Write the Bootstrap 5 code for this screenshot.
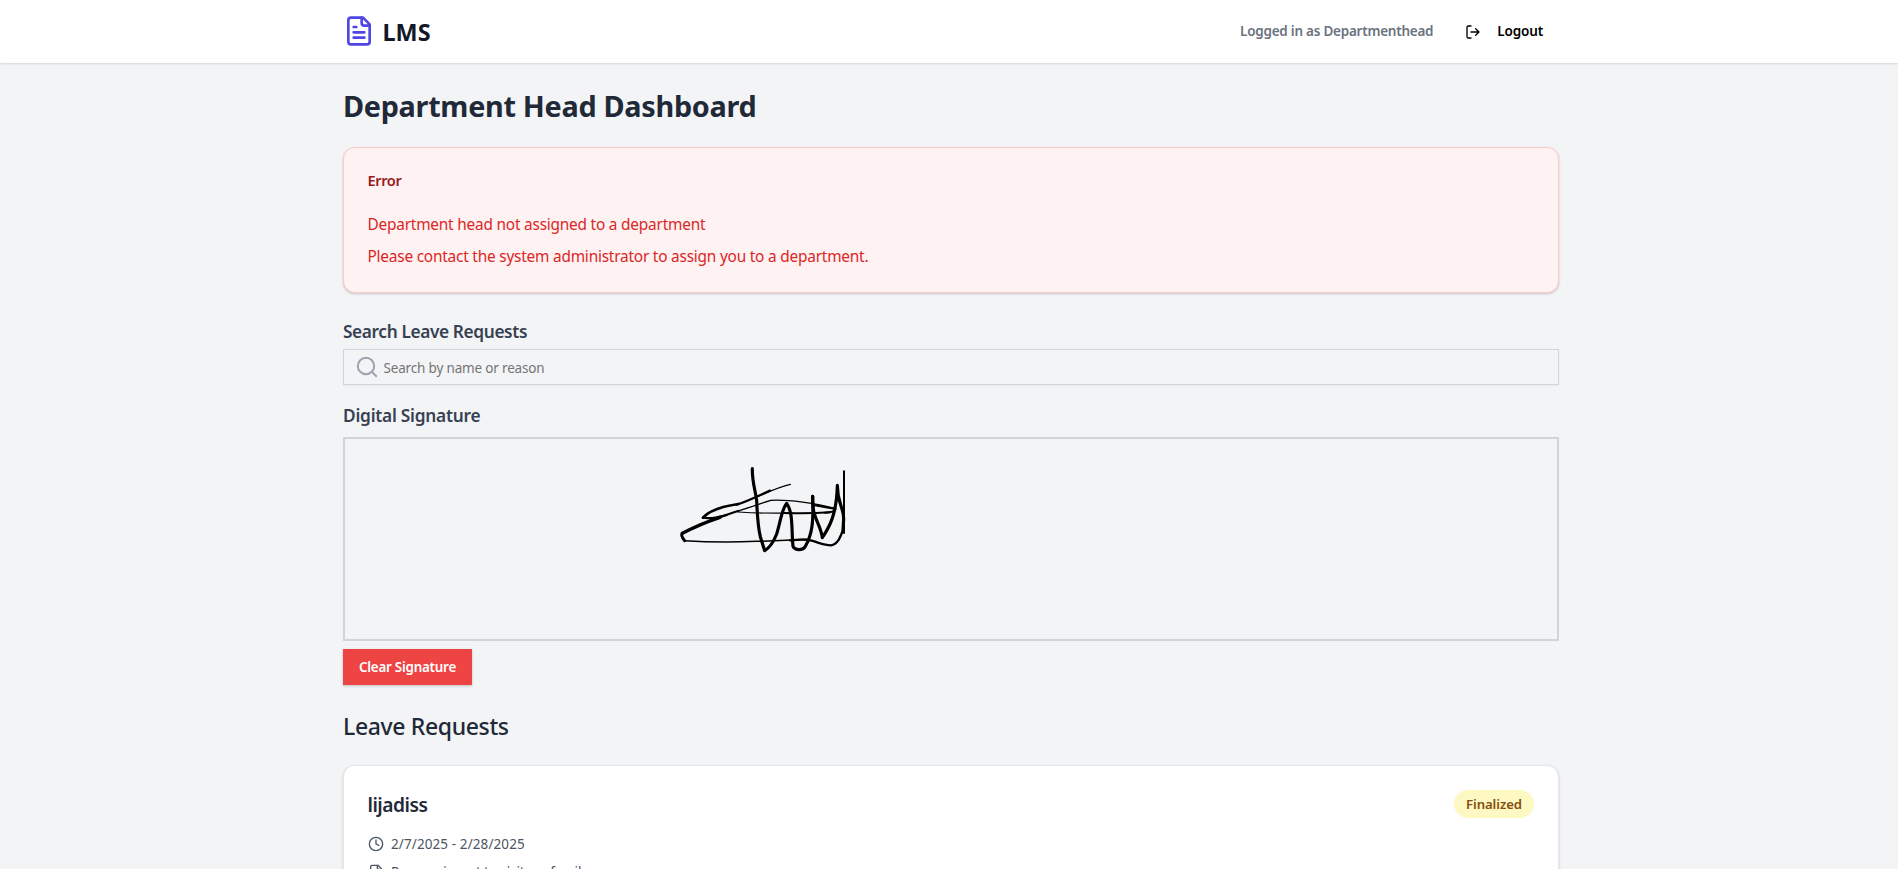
<!DOCTYPE html>
<html lang="en">
<head>
<meta charset="utf-8">
<meta name="viewport" content="width=device-width, initial-scale=1">
<title>LMS - Department Head Dashboard</title>
<link rel="stylesheet" href="https://cdn.jsdelivr.net/npm/bootstrap@5.3.0/dist/css/bootstrap.min.css">
<style>
  html, body { height: 100%; overflow: hidden; }
  body { background: #f3f4f6; font-family: "Segoe UI", "Noto Sans", sans-serif; color: #1f2937; }
  svg { flex: none; }
  .shell { width: 1216px; margin-left: calc(50% - 606px); }
  .topbar { height: 63px; box-shadow: 0 1px 2px rgba(0,0,0,.13); }
  .brand { font-size: 23.4px; line-height: 32px; font-weight: 700; color: #111827; padding-top: 1px; gap: 7.5px; }
  .brand svg { color: #4f46e5; margin-top: -2px; }
  .who { font-size: 13.5px; font-weight: 600; color: #6b7280; letter-spacing: -.24px; }
  .logout { font-size: 13.5px; font-weight: 600; color: #000; letter-spacing: -.15px; padding: 0 16px; gap: 16px; border: 0; background: none; }
  .page-title { font-size: 28.8px; line-height: 36px; font-weight: 700; letter-spacing: -.29px; margin: 0; padding: 25px 0 23px; }
  .panel { border-radius: 12px; padding: 24px; box-shadow: 0 1px 3px rgba(0,0,0,.1), 0 1px 2px rgba(0,0,0,.1); }
  .panel-error { background: #fef2f2; border: 1px solid #fecaca; color: #dc2626; padding: 24px 23.5px; }
  .panel-error h2 { font-size: 14.6px; line-height: 16px; font-weight: 600; color: #991b1b; letter-spacing: -.4px; margin: 0 0 25px; }
  .panel-error p { font-size: 15.4px; line-height: 24px; letter-spacing: -.21px; margin: 0; }
  .panel-error p:last-child { margin-bottom: -1px; }
  .field-label { display: block; font-size: 17.3px; line-height: 28px; height: 28px; padding-top: 1px; font-weight: 600; color: #374151; }
  .search-box { height: 36px; border: 1px solid #d1d5db; padding-left: 11px; gap: 4.5px; box-shadow: 0 1px 2px rgba(0,0,0,.05); color: #9ca3af; }
  .search-box input { border: 0; outline: 0; background: none; padding: 2px 0 0; font-size: 13.5px; letter-spacing: -.17px; }
  .search-box input::placeholder { color: #757575; opacity: 1; }
  .sign-pad { height: 204px; border: 2px solid #d1d5db; }
  .clear-btn { width: 129px; height: 36px; background: #ef4444; color: #fff; border: 0; font-size: 13.4px; font-weight: 600; letter-spacing: -.24px; padding: 0; box-shadow: 0 1px 3px rgba(0,0,0,.12), 0 1px 2px rgba(0,0,0,.1); }
  .section-title { font-size: 23px; line-height: 32px; font-weight: 500; letter-spacing: -.36px; margin: 24px 0; padding-top: 1px; height: 32px; }
  .request { background: #fff; border: 1px solid #e5e7eb; padding-left: 23.5px; }
  .request h3 { font-size: 19.2px; line-height: 28px; height: 28px; padding-top: 1px; font-weight: 600; letter-spacing: -.5px; margin: 0; }
  .status { width: 80px; height: 28px; background: #fef9c3; color: #854d0e; font-size: 13.2px; font-weight: 600; letter-spacing: -.1px; padding-top: 1px; }
  .meta { font-size: 13.5px; line-height: 20px; height: 20px; color: #4b5563; gap: 7.5px; }
</style>
</head>
<body>
<nav class="topbar bg-white">
  <div class="shell h-100 d-flex align-items-center justify-content-between">
    <div class="brand d-flex align-items-center">
      <svg width="32" height="32" viewBox="0 0 24 24" fill="none" stroke="currentColor" stroke-width="2" stroke-linecap="round" stroke-linejoin="round"><path d="M15 2H6a2 2 0 0 0-2 2v16a2 2 0 0 0 2 2h12a2 2 0 0 0 2-2V7Z"/><path d="M14 2v4a2 2 0 0 0 2 2h4M10 9H8M16 13H8M16 17H8"/></svg>
      <span>LMS</span>
    </div>
    <div class="d-flex align-items-center gap-3">
      <span class="who">Logged in as Departmenthead</span>
      <button class="logout d-flex align-items-center">
        <svg width="16" height="16" viewBox="0 0 24 24" fill="none" stroke="currentColor" stroke-width="2" stroke-linecap="round" stroke-linejoin="round"><path d="M9 21H5a2 2 0 0 1-2-2V5a2 2 0 0 1 2-2h4M16 17l5-5-5-5M21 12H9"/></svg>
        <span>Logout</span>
      </button>
    </div>
  </div>
</nav>
<main class="shell">
  <h1 class="page-title">Department Head Dashboard</h1>

  <section class="panel panel-error">
    <h2>Error</h2>
    <p class="mb-2">Department head not assigned to a department</p>
    <p>Please contact the system administrator to assign you to a department.</p>
  </section>

  <label class="field-label mt-4 mb-1" for="q" style="letter-spacing:-.38px">Search Leave Requests</label>
  <div class="search-box d-flex align-items-center">
    <svg width="24" height="24" viewBox="0 0 24 24" fill="none" stroke="currentColor" stroke-width="2"><circle cx="11" cy="11" r="8.2"/><path d="M16.8 16.8L21.8 21.8"/></svg>
    <input id="q" class="flex-grow-1" type="text" placeholder="Search by name or reason">
  </div>

  <span class="field-label mt-3 mb-2" style="letter-spacing:-.24px">Digital Signature</span>
  <div class="sign-pad mb-2">
    <svg class="d-block" width="1212" height="200" viewBox="0 0 1212 200" fill="none" stroke="#000" stroke-linecap="round" stroke-linejoin="round">
      <g transform="translate(325 16) scale(.33333)">
        <path stroke-width="4" d="M361 88C330 95 300 108 262 125"/>
        <path stroke-width="7" d="M300 107C262 124 225 142 200 149"/>
        <path stroke-width="8" d="M205 147C165 153 118 166 99 188"/>
        <path stroke-width="7" d="M99 188Q125 193 170 180"/>
        <path stroke-width="10" d="M37 235C65 220 105 202 150 187"/>
        <path stroke-width="7" d="M140 190C165 181 185 174 205 168"/>
        <path stroke-width="4" d="M200 169C240 158 275 144 302 136C355 133 440 145 495 160"/>
        <path stroke-width="6" d="M430 150L497 162Q495 172 465 173"/>
        <path stroke-width="3.5" d="M205 171Q280 176 370 174"/>
        <path stroke-width="6" d="M340 174Q420 176 480 172"/>
        <path stroke-width="9" d="M37 235Q31 242 44 257"/>
        <path stroke-width="4.5" d="M44 257C120 262 190 262 260 259Q345 257 410 253"/>
        <path stroke-width="7" d="M360 256Q405 251 425 257C455 266 465 271 483 271C504 268 511 246 519 225"/>
        <path stroke-width="9.5" d="M247 41C246 80 256 105 260 137C262 185 263 213 271 245L284 287Q305 275 320 237C331 201 336 160 350 145C370 172 364 225 369 274C373 286 396 288 405 276C426 240 431 205 428 124"/>
        <path stroke-width="9.5" d="M428 124C425 190 451 204 457 248C477 218 500 180 502 91C502 145 520 154 521 190L519 225"/>
        <path stroke-width="6" d="M522 49V234"/>
      </g>
    </svg>
  </div>
  <button class="clear-btn d-block">Clear Signature</button>

  <h2 class="section-title">Leave Requests</h2>
  <section class="panel request">
    <div class="d-flex justify-content-between align-items-center mb-3">
      <h3>lijadiss</h3>
      <span class="status rounded-pill d-flex align-items-center justify-content-center">Finalized</span>
    </div>
    <div class="meta d-flex align-items-center mb-2">
      <svg width="16" height="16" viewBox="0 0 24 24" fill="none" stroke="currentColor" stroke-width="2" stroke-linecap="round" stroke-linejoin="round"><circle cx="12" cy="12" r="10"/><path d="M12 6v6l4 2"/></svg>
      <span style="letter-spacing:.1px">2/7/2025 - 2/28/2025</span>
    </div>
    <div class="meta d-flex align-items-center">
      <svg width="16" height="16" viewBox="0 0 24 24" fill="none" stroke="currentColor" stroke-width="2" stroke-linecap="round" stroke-linejoin="round"><path d="M15 2H6a2 2 0 0 0-2 2v16a2 2 0 0 0 2 2h12a2 2 0 0 0 2-2V7Z"/><path d="M14 2v4a2 2 0 0 0 2 2h4M10 9H8M16 13H8M16 17H8"/></svg>
      <span style="letter-spacing:-.17px">Reason: i want to visit my family</span>
    </div>
  </section>
</main>
<script src="https://cdn.jsdelivr.net/npm/bootstrap@5.3.0/dist/js/bootstrap.bundle.min.js"></script>
</body>
</html>
